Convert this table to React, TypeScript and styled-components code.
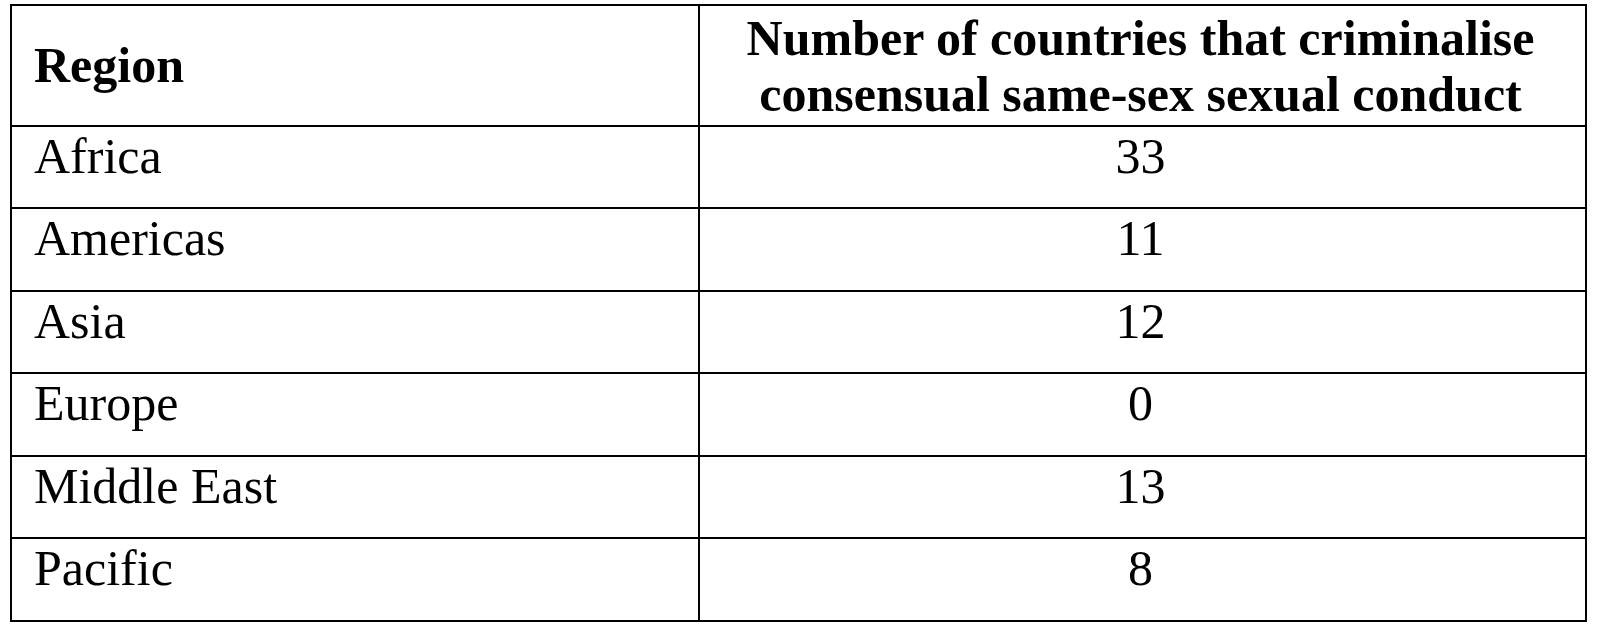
import React from "react";
import styled, { createGlobalStyle } from "styled-components";

const GlobalStyle = createGlobalStyle`
  html, body {
    margin: 0;
    padding: 0;
    background: #ffffff;
  }
  body {
    font-family: "Liberation Serif", "Times New Roman", serif;
    color: #000000;
  }
`;

const Page = styled.div`
  padding: 4px 0 0 10px;
`;

const Table = styled.div`
  display: grid;
  grid-template-columns: 688px 887px;
  width: 1577px;
  border-top: 2px solid #000;
  border-left: 2px solid #000;
  box-sizing: border-box;
`;

const Cell = styled.div<{ $h: number; $center?: boolean; $head?: boolean }>`
  box-sizing: border-box;
  height: ${(p) => p.$h + 2}px;
  border-right: 2px solid #000;
  border-bottom: 2px solid #000;
  font-size: 50px;
  line-height: 57px;
  font-weight: ${(p) => (p.$head ? 700 : 400)};
  display: flex;
  flex-direction: column;
  justify-content: ${(p) => (p.$head ? "center" : "flex-start")};
  align-items: ${(p) => (p.$center ? "center" : "flex-start")};
  text-align: ${(p) => (p.$center ? "center" : "left")};
  padding-top: ${(p) => (p.$head ? "0" : "1px")};
  padding-right: ${(p) => (p.$center ? "4px" : "0")};
  padding-left: ${(p) => (p.$center ? "0" : "22px")};
  white-space: nowrap;
`;

const HeadLines = styled.div`
  line-height: 56px;
`;

const rows: [string, string][] = [
  ["Africa", "33"],
  ["Americas", "11"],
  ["Asia", "12"],
  ["Europe", "0"],
  ["Middle East", "13"],
  ["Pacific", "8"],
];

const heights = [80, 81, 80, 81, 80, 81];

export default function App() {
  return (
    <>
      <GlobalStyle />
      <Page>
        <Table>
          <Cell $h={119} $head>
            Region
          </Cell>
          <Cell $h={119} $head $center>
            <HeadLines>
              Number of countries that criminalise
              <br />
              consensual same-sex sexual conduct
            </HeadLines>
          </Cell>
          {rows.map(([region, n], i) => (
            <React.Fragment key={region}>
              <Cell $h={heights[i]}>{region}</Cell>
              <Cell $h={heights[i]} $center>
                {n}
              </Cell>
            </React.Fragment>
          ))}
        </Table>
      </Page>
    </>
  );
}
